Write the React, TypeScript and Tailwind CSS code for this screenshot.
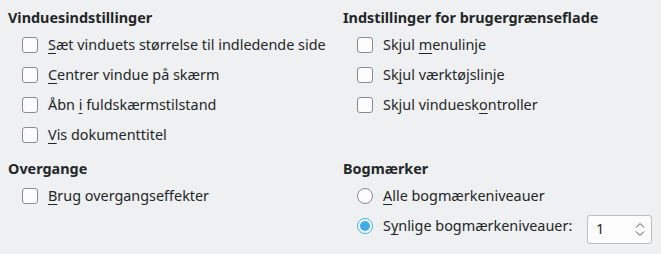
import React from "react";

const U = ({ children }: { children: React.ReactNode }) => (
  <span className="underline decoration-1 underline-offset-[3px]">{children}</span>
);

const Check = ({ children }: { children: React.ReactNode }) => (
  <div className="flex items-center h-[30px] pl-[14px]">
    <div className="w-4 h-4 rounded-[3px] border border-[#8a8c8e] bg-[#fcfcfc] shrink-0" />
    <span className="ml-[10px] whitespace-nowrap">{children}</span>
  </div>
);

const Radio = ({ checked }: { checked?: boolean }) =>
  checked ? (
    <div className="w-4 h-4 rounded-full border border-[#3daee9] bg-white flex items-center justify-center shrink-0">
      <div className="w-[10px] h-[10px] rounded-full bg-[#3daee9]" />
    </div>
  ) : (
    <div className="w-4 h-4 rounded-full border border-[#8a8c8e] bg-[#fcfcfc] shrink-0" />
  );

const Heading = ({ children }: { children: React.ReactNode }) => (
  <div className="h-5 leading-5 font-bold whitespace-nowrap mb-[2px]">{children}</div>
);

export default function App() {
  return (
    <div
      className="w-[661px] h-[254px] bg-[#eff0f1] text-[#232629] text-[14.4px] overflow-hidden"
      style={{ fontFamily: '"Noto Sans", "DejaVu Sans", sans-serif' }}
    >
      <div className="grid grid-cols-[335px_1fr] pl-2 pt-2">
        <div>
          <Heading>Vinduesindstillinger</Heading>
          <Check><U>S</U>æt vinduets størrelse til indledende side</Check>
          <Check><U>C</U>entrer vindue på skærm</Check>
          <Check>Åbn <U>i</U> fuldskærmstilstand</Check>
          <Check><U>V</U>is dokumenttitel</Check>
        </div>
        <div>
          <Heading>Indstillinger for brugergrænseflade</Heading>
          <Check>Skjul <U>m</U>enulinje</Check>
          <Check>Sk<U>j</U>ul værktøjslinje</Check>
          <Check>Skjul vinduesk<U>o</U>ntroller</Check>
        </div>
        <div className="pt-[9px]">
          <Heading>Overgange</Heading>
          <Check><U>B</U>rug overgangseffekter</Check>
        </div>
        <div className="pt-[9px]">
          <Heading>Bogmærker</Heading>
          <div className="flex items-center h-[30px] pl-[14px]">
            <Radio />
            <span className="ml-[10px] whitespace-nowrap"><U>A</U>lle bogmærkeniveauer</span>
          </div>
          <div className="flex items-center h-[36px] pl-[14px]">
            <div className="flex items-center pb-[6px]">
              <Radio checked />
              <span className="ml-[10px] whitespace-nowrap">S<U>y</U>nlige bogmærkeniveauer:</span>
            </div>
            <div className="ml-auto mr-[9px] w-[65px] h-[29px] rounded-[3px] border border-[#bcbebf] bg-[#fcfcfc] flex items-center pl-2 pr-[6px]">
              <span className="flex-1">1</span>
              <svg width="10" height="20" viewBox="0 0 10 20" fill="none" stroke="#4d4f51" strokeWidth="1">
                <path d="M1 8.5 L5 4.5 L9 8.5" />
                <path d="M1 12.5 L5 16.5 L9 12.5" />
              </svg>
            </div>
          </div>
        </div>
      </div>
    </div>
  );
}
